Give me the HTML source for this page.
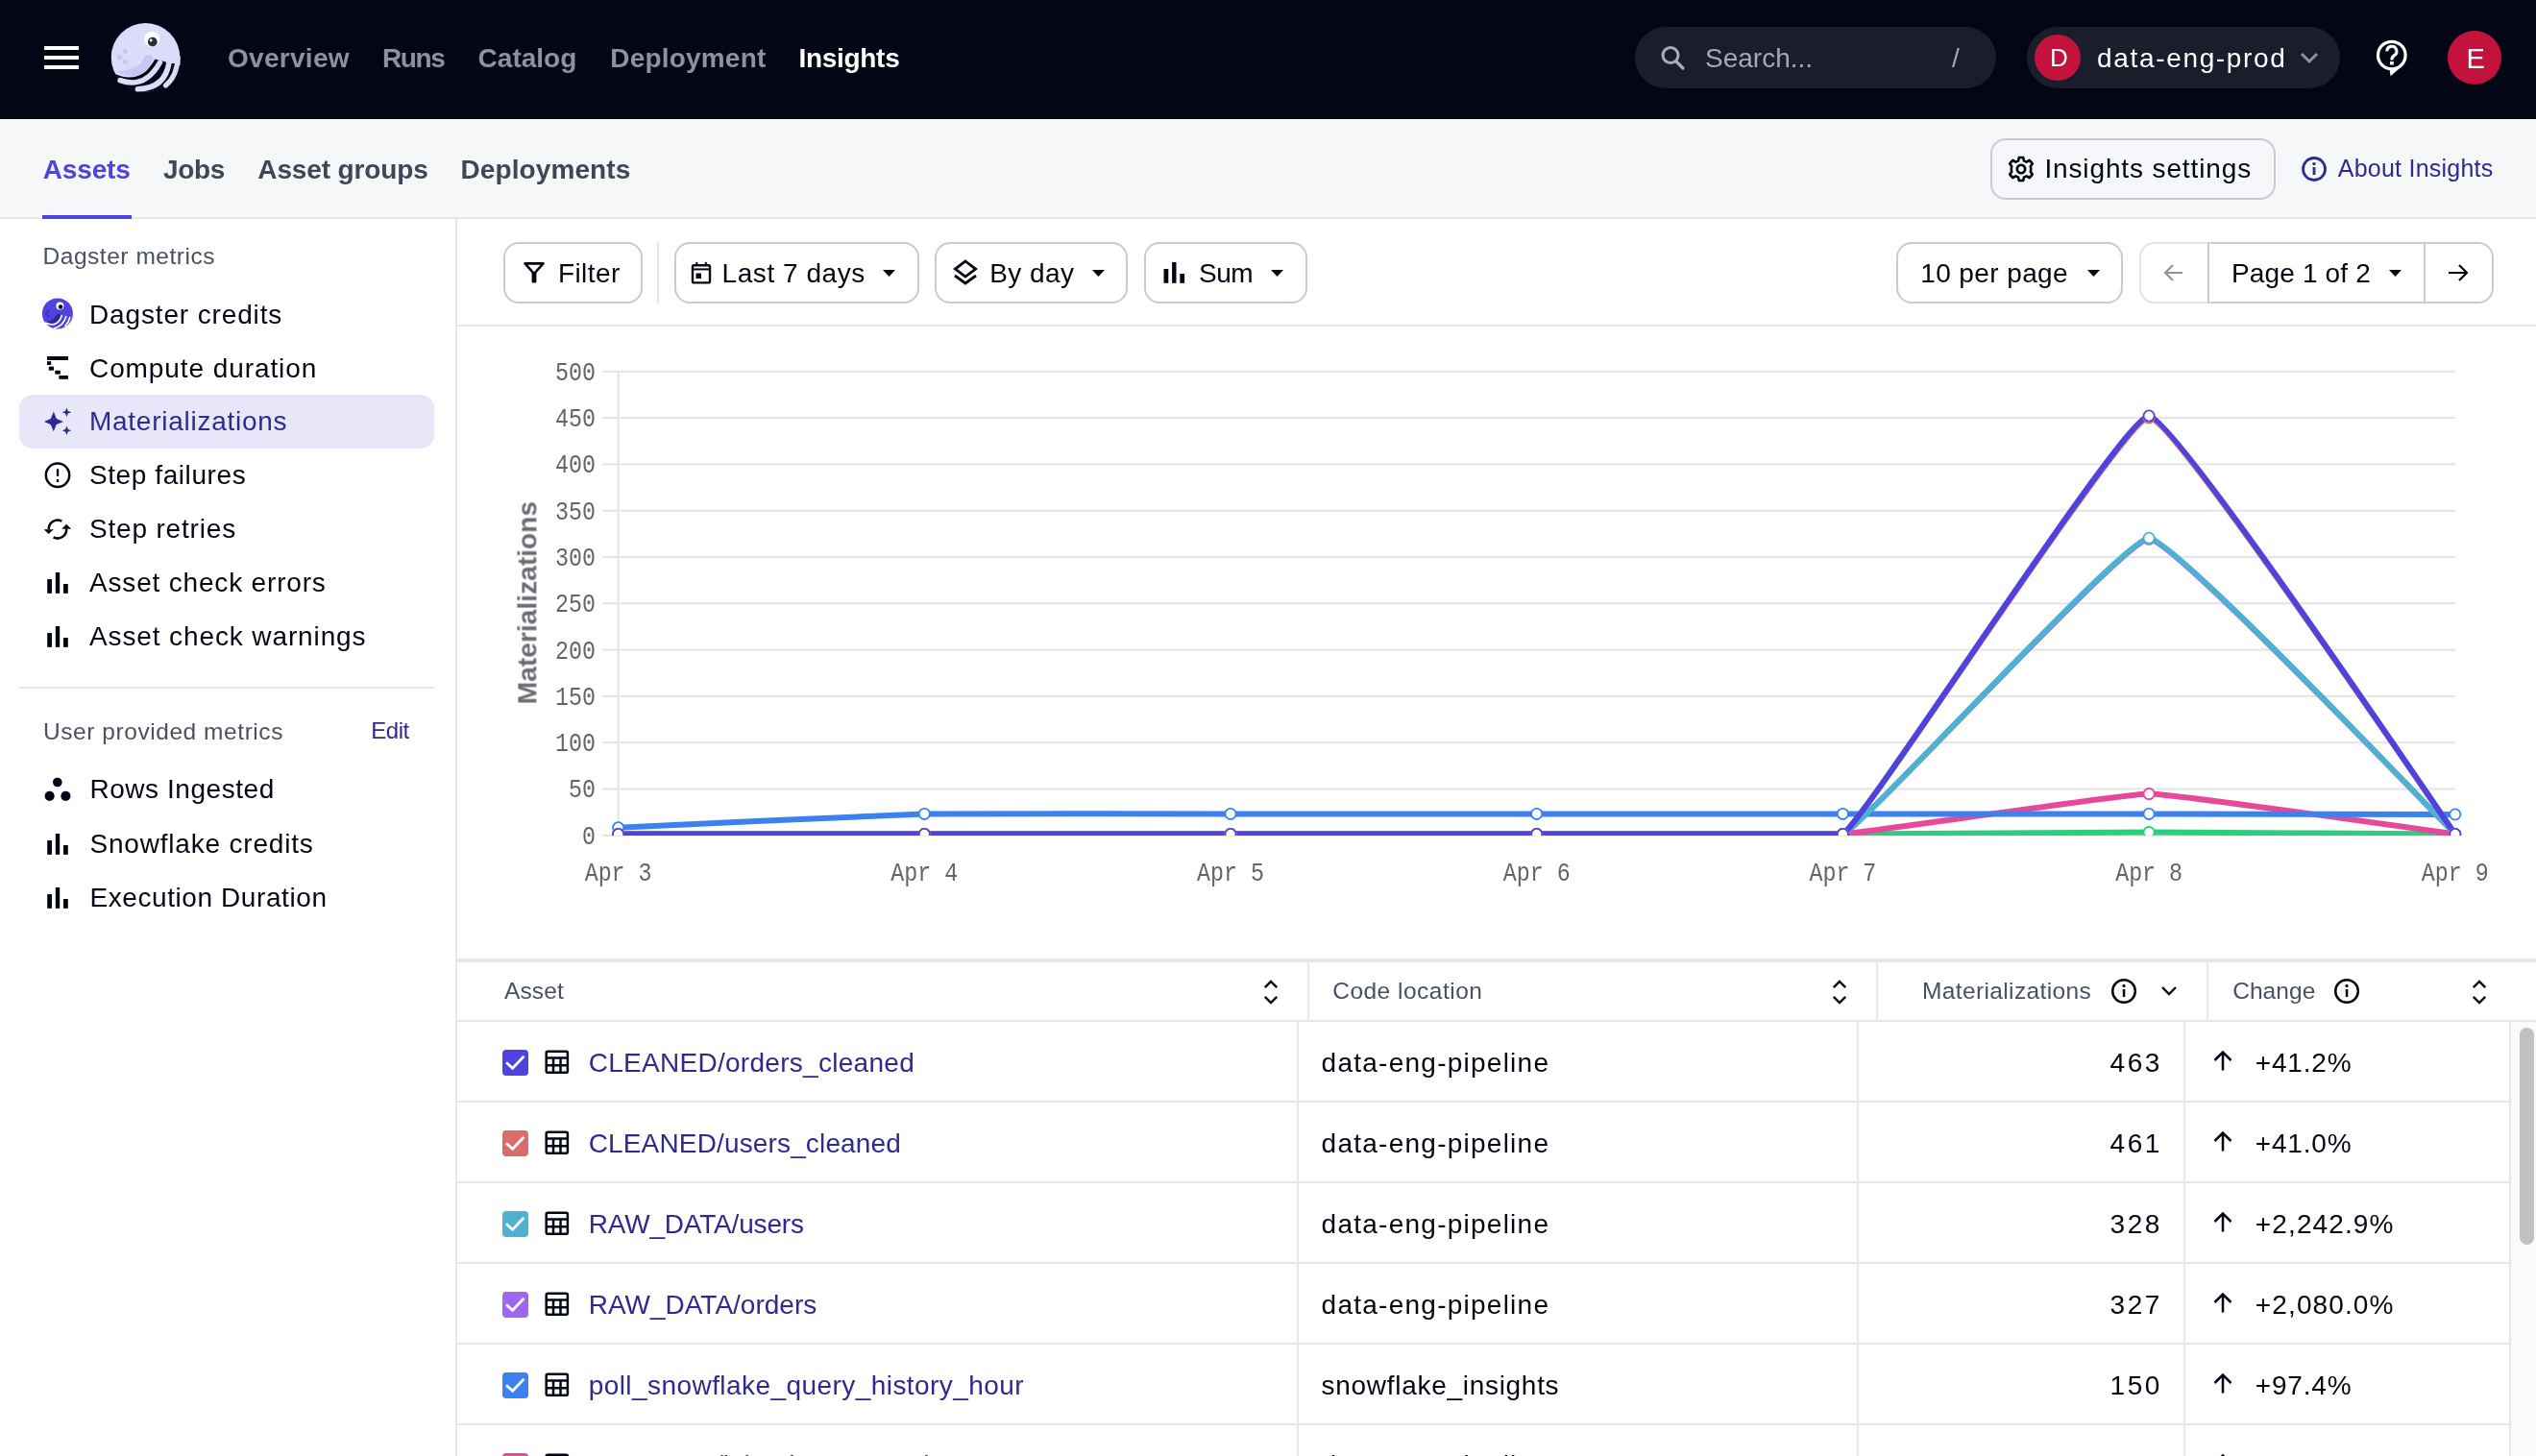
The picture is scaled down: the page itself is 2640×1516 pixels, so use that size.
<!DOCTYPE html>
<html><head><meta charset="utf-8"><style>
html,body{margin:0;padding:0;width:2640px;height:1516px;overflow:hidden;background:#fff;}
body{position:relative;font-family:"Liberation Sans",sans-serif;}
.t{position:absolute;white-space:nowrap;}
.b{position:absolute;display:block;}
</style></head><body><div id="root" style="position:absolute;left:0;top:0;width:2640px;height:1516px;will-change:transform">
<div class="b" style="left:0px;top:0px;width:2640px;height:124px;background:#030615"></div>
<div class="b" style="left:46px;top:48px;width:36px;height:4px;background:#fff"></div>
<div class="b" style="left:46px;top:58px;width:36px;height:4px;background:#fff"></div>
<div class="b" style="left:46px;top:68px;width:36px;height:4px;background:#fff"></div>
<svg class="b" style="left:110px;top:18px;" width="84" height="84" viewBox="0 0 84 84">
<g transform="translate(-110,-18)">
<defs><clipPath id="lc"><circle cx="151.5" cy="59.8" r="35.9"/></clipPath></defs>
<circle cx="151.5" cy="59.8" r="35.8" fill="#dcdcfa"/>
<g clip-path="url(#lc)">
<path d="M118 76 Q145 90 161.5 61.5 Q165 63 169.5 63.5 L172 64.5 Q176 66 179 66 L188 66 L200 110 L110 110 Z" fill="#030615"/>
</g>
<path d="M121 74 Q134 82 146 78 Q156 74 159.5 60 Q156 55 151 58 Q146 74 121 74Z" fill="#c7c7f1"/>
<path d="M125 83.6 Q151 93 166.5 65" stroke="#dcdcfa" stroke-width="5.4" fill="none" stroke-linecap="round"/>
<path d="M143.5 92.8 Q172 92 176 65" stroke="#dcdcfa" stroke-width="5.6" fill="none" stroke-linecap="round"/>
<path d="M172.5 89 Q184.5 79 185 60" stroke="#dcdcfa" stroke-width="5.2" fill="none" stroke-linecap="round"/>
<path d="M181 64 Q183 60 187.5 58 L187.5 68 L183 68 Z" fill="#dcdcfa"/>
<circle cx="158.2" cy="41" r="8" fill="#fff"/>
<circle cx="158.8" cy="43.6" r="4.9" fill="#2b2e40"/>
<circle cx="157.2" cy="42" r="1.4" fill="#fff"/>
<circle cx="130.5" cy="53.5" r="2.5" fill="#c7c7f1"/>
<circle cx="124.6" cy="59.5" r="2.6" fill="#c7c7f1"/>
<circle cx="130.3" cy="64.6" r="2.5" fill="#c7c7f1"/>
</g></svg>
<div class="t" style="left:237.00px;top:43.00px;font-size:28px;line-height:35px;font-weight:700;color:#8d91a0;letter-spacing:0.286px;font-family:"Liberation Sans",sans-serif;">Overview</div>
<div class="t" style="left:398.00px;top:43.00px;font-size:28px;line-height:35px;font-weight:700;color:#8d91a0;letter-spacing:-1.433px;font-family:"Liberation Sans",sans-serif;">Runs</div>
<div class="t" style="left:497.60px;top:43.00px;font-size:28px;line-height:35px;font-weight:700;color:#8d91a0;letter-spacing:0.000px;font-family:"Liberation Sans",sans-serif;">Catalog</div>
<div class="t" style="left:635.30px;top:43.00px;font-size:28px;line-height:35px;font-weight:700;color:#8d91a0;letter-spacing:0.189px;font-family:"Liberation Sans",sans-serif;">Deployment</div>
<div class="t" style="left:831.40px;top:43.00px;font-size:28px;line-height:35px;font-weight:700;color:#ffffff;letter-spacing:-0.286px;font-family:"Liberation Sans",sans-serif;">Insights</div>
<div class="b" style="left:1702px;top:28px;width:376px;height:64px;background:#191d2c;border-radius:32px"></div>
<svg class="b" style="left:1726px;top:44px;" width="30" height="30" viewBox="0 0 30 30"><g transform="translate(-1726,-44)"><circle cx="1739" cy="57.5" r="8" stroke="#a9abbb" stroke-width="3" fill="none"/><path d="M1745 64 L1752 71" stroke="#a9abbb" stroke-width="3.2" stroke-linecap="round"/></g></svg>
<div class="t" style="left:1775.00px;top:43.00px;font-size:28px;line-height:35px;font-weight:400;color:#a6a8b8;letter-spacing:0.000px;font-family:"Liberation Sans",sans-serif;">Search...</div>
<div class="t" style="left:2032.00px;top:43.00px;font-size:28px;line-height:35px;font-weight:400;color:#a6a8b8;letter-spacing:0.000px;font-family:"Liberation Sans",sans-serif;">/</div>
<div class="b" style="left:2110px;top:28px;width:326px;height:64px;background:#191d2c;border-radius:32px"></div>
<div class="b" style="left:2118px;top:36px;width:48px;height:48px;background:#c3123b;border-radius:50%"></div>
<div class="t" style="left:2134.00px;top:44.19px;font-size:26px;line-height:32px;font-weight:400;color:#fff;letter-spacing:0.000px;font-family:"Liberation Sans",sans-serif;">D</div>
<div class="t" style="left:2183.00px;top:43.00px;font-size:28px;line-height:35px;font-weight:400;color:#ffffff;letter-spacing:1.667px;font-family:"Liberation Sans",sans-serif;">data-eng-prod</div>
<svg class="b" style="left:2392px;top:50px;" width="24" height="20" viewBox="0 0 24 20"><path d="M4 6 L12 14 L20 6" stroke="#8d91a0" stroke-width="3" fill="none"/></svg>
<svg class="b" style="left:2466px;top:36px;" width="48" height="48" viewBox="0 0 48 48"><g transform="translate(-2466,-36)"><circle cx="2489.8" cy="57.6" r="14.3" fill="none" stroke="#fff" stroke-width="3.2"/><path d="M2487.4 71.4 L2488.6 79.2 L2504.4 65.6 L2501.2 67.2 Q2496 71.6 2489.8 71.9 Z" fill="#fff"/><path d="M2484.9 53.4 A5 5 0 1 1 2492.4 57.6 Q2489.9 59.2 2489.9 62.4" fill="none" stroke="#fff" stroke-width="3.1"/><rect x="2488" y="64.1" width="3.8" height="3.4" fill="#fff"/></g></svg>
<div class="b" style="left:2548px;top:32px;width:56px;height:56px;background:#c3123b;border-radius:50%"></div>
<div class="t" style="left:2567.50px;top:42.95px;font-size:29px;line-height:36px;font-weight:400;color:#fff;letter-spacing:0.000px;font-family:"Liberation Sans",sans-serif;transform:scaleX(0.82);transform-origin:left">E</div>
<div class="b" style="left:0px;top:124px;width:2640px;height:104px;background:#f6f7f9"></div>
<div class="b" style="left:0px;top:226px;width:2640px;height:2px;background:#e6e7eb"></div>
<div class="t" style="left:44.80px;top:158.80px;font-size:28px;line-height:35px;font-weight:700;color:#4f43dd;letter-spacing:-0.160px;font-family:"Liberation Sans",sans-serif;">Assets</div>
<div class="b" style="left:44px;top:224px;width:93px;height:4px;background:#4f43dd"></div>
<div class="t" style="left:169.90px;top:158.80px;font-size:28px;line-height:35px;font-weight:700;color:#3f4657;letter-spacing:-0.333px;font-family:"Liberation Sans",sans-serif;">Jobs</div>
<div class="t" style="left:268.30px;top:158.80px;font-size:28px;line-height:35px;font-weight:700;color:#3f4657;letter-spacing:-0.127px;font-family:"Liberation Sans",sans-serif;">Asset groups</div>
<div class="t" style="left:479.50px;top:158.80px;font-size:28px;line-height:35px;font-weight:700;color:#3f4657;letter-spacing:0.100px;font-family:"Liberation Sans",sans-serif;">Deployments</div>
<div class="b" style="left:2072px;top:144px;width:297px;height:64px;border:2px solid #c9cad4;border-radius:16px;box-sizing:border-box"></div>
<svg class="b" style="left:2090px;top:162px;" width="28" height="28" viewBox="0 0 28 28"><g transform="translate(14,14)" fill="none" stroke="#030615" stroke-width="2.6"><path d="M-2.2,-12 L2.2,-12 L3,-8.6 L5.6,-7.3 L8.7,-9 L11.8,-5.6 L9.8,-2.8 L10.3,0 L9.8,2.8 L11.8,5.6 L8.7,9 L5.6,7.3 L3,8.6 L2.2,12 L-2.2,12 L-3,8.6 L-5.6,7.3 L-8.7,9 L-11.8,5.6 L-9.8,2.8 L-10.3,0 L-9.8,-2.8 L-11.8,-5.6 L-8.7,-9 L-5.6,-7.3 L-3,-8.6 Z" stroke-linejoin="round"/><circle r="4.2"/></g></svg>
<div class="t" style="left:2128.40px;top:158.40px;font-size:28px;line-height:35px;font-weight:400;color:#030615;letter-spacing:0.875px;font-family:"Liberation Sans",sans-serif;">Insights settings</div>
<svg class="b" style="left:2394px;top:161px;" width="30" height="30" viewBox="0 0 30 30"><circle cx="15" cy="15" r="11.5" fill="none" stroke="#2e2a91" stroke-width="2.8"/><rect x="13.6" y="13" width="2.8" height="8" fill="#2e2a91"/><circle cx="15" cy="9.6" r="1.7" fill="#2e2a91"/></svg>
<div class="t" style="left:2433.80px;top:159.84px;font-size:25px;line-height:31px;font-weight:400;color:#2e2a91;letter-spacing:0.231px;font-family:"Liberation Sans",sans-serif;">About Insights</div>
<div class="b" style="left:474px;top:228px;width:2px;height:1288px;background:#e6e7eb"></div>
<div class="t" style="left:44.50px;top:251.41px;font-size:24.5px;line-height:31px;font-weight:400;color:#4a5063;letter-spacing:0.536px;font-family:"Liberation Sans",sans-serif;">Dagster metrics</div>
<div class="b" style="left:20px;top:411px;width:432px;height:56px;background:#e8e7f9;border-radius:14px"></div>
<div class="t" style="left:93.00px;top:309.80px;font-size:28px;line-height:35px;font-weight:400;color:#030615;letter-spacing:0.857px;font-family:"Liberation Sans",sans-serif;">Dagster credits</div>
<div class="t" style="left:93.00px;top:365.80px;font-size:28px;line-height:35px;font-weight:400;color:#030615;letter-spacing:0.913px;font-family:"Liberation Sans",sans-serif;">Compute duration</div>
<div class="t" style="left:93.00px;top:421.30px;font-size:28px;line-height:35px;font-weight:400;color:#2e2a91;letter-spacing:0.733px;font-family:"Liberation Sans",sans-serif;">Materializations</div>
<div class="t" style="left:93.00px;top:476.80px;font-size:28px;line-height:35px;font-weight:400;color:#030615;letter-spacing:0.583px;font-family:"Liberation Sans",sans-serif;">Step failures</div>
<div class="t" style="left:93.00px;top:532.80px;font-size:28px;line-height:35px;font-weight:400;color:#030615;letter-spacing:0.818px;font-family:"Liberation Sans",sans-serif;">Step retries</div>
<div class="t" style="left:93.00px;top:588.80px;font-size:28px;line-height:35px;font-weight:400;color:#030615;letter-spacing:0.824px;font-family:"Liberation Sans",sans-serif;">Asset check errors</div>
<div class="t" style="left:93.00px;top:644.80px;font-size:28px;line-height:35px;font-weight:400;color:#030615;letter-spacing:0.884px;font-family:"Liberation Sans",sans-serif;">Asset check warnings</div>
<div class="b" style="left:20px;top:715px;width:432px;height:2px;background:#e6e7eb"></div>
<div class="t" style="left:45.00px;top:746.01px;font-size:24.5px;line-height:31px;font-weight:400;color:#4a5063;letter-spacing:0.557px;font-family:"Liberation Sans",sans-serif;">User provided metrics</div>
<div class="t" style="left:386.20px;top:746.38px;font-size:24px;line-height:30px;font-weight:400;color:#2e2a91;letter-spacing:-0.433px;font-family:"Liberation Sans",sans-serif;">Edit</div>
<div class="t" style="left:93.40px;top:804.40px;font-size:28px;line-height:35px;font-weight:400;color:#030615;letter-spacing:0.550px;font-family:"Liberation Sans",sans-serif;">Rows Ingested</div>
<div class="t" style="left:93.40px;top:860.50px;font-size:28px;line-height:35px;font-weight:400;color:#030615;letter-spacing:0.812px;font-family:"Liberation Sans",sans-serif;">Snowflake credits</div>
<div class="t" style="left:93.40px;top:916.50px;font-size:28px;line-height:35px;font-weight:400;color:#030615;letter-spacing:0.588px;font-family:"Liberation Sans",sans-serif;">Execution Duration</div>
<svg class="b" style="left:42px;top:308px;" width="36" height="36" viewBox="0 0 36 36"><g transform="translate(-42,-308)">
<circle cx="59.9" cy="326.4" r="16" fill="#4f43dd"/>
<circle cx="62.4" cy="318.5" r="4" fill="#fff"/><circle cx="63" cy="319.5" r="2.2" fill="#030615"/>
<circle cx="50.2" cy="324" r="1.1" fill="#2e2890"/><circle cx="48.1" cy="326.5" r="1.1" fill="#2e2890"/><circle cx="50.3" cy="329" r="1.1" fill="#2e2890"/>
<path d="M46.6 335.6 Q56.6 341 63.5 332.5 L63 327 Q59 326 56.5 331 Q53 335 46.6 335.6Z" fill="#2e2890"/>
<path d="M47 336 Q60 342 64.5 328" stroke="#fff" stroke-width="1.6" fill="none"/>
<path d="M55.8 342 Q66 340 69 329" stroke="#fff" stroke-width="1.6" fill="none"/>
<path d="M67.5 340 Q71.5 336 73 330" stroke="#fff" stroke-width="1.6" fill="none"/>
</g></svg>
<svg class="b" style="left:46px;top:368px;" width="28" height="30" viewBox="0 0 28 30"><g transform="translate(-46,-368)" fill="#030615">
<rect x="49" y="371" width="22" height="4"/><rect x="49" y="376.2" width="4.2" height="3.8"/><rect x="50.8" y="381.7" width="5.2" height="4"/><rect x="57.3" y="385.8" width="5.5" height="3.8"/><rect x="61.3" y="391" width="9.6" height="3.8"/></g></svg>
<svg class="b" style="left:44px;top:426px;overflow:visible" width="32" height="26" viewBox="0 0 32 26"><g transform="translate(-44,-426)" fill="#2e2a91">
<path d="M55.8 428.6 L58.8 436 L66 439 L58.8 442 L55.8 449.2 L52.8 442 L45.8 439 L52.8 436Z"/>
<path d="M69.4 424.6 L70.8 428 L74.3 429.3 L70.8 430.6 L69.4 434 L68 430.6 L64.5 429.3 L68 428Z"/>
<path d="M69.4 443.6 L70.8 447 L74.3 448.3 L70.8 449.6 L69.4 453 L68 449.6 L64.5 448.3 L68 447Z"/>
</g></svg>
<svg class="b" style="left:44px;top:478px;" width="32" height="34" viewBox="0 0 32 34"><g transform="translate(-44,-478)">
<circle cx="60" cy="494.8" r="12.2" fill="none" stroke="#030615" stroke-width="2.5"/>
<rect x="58.9" y="488.3" width="2.3" height="7.6" fill="#030615"/><rect x="58.9" y="499" width="2.3" height="3" fill="#030615"/></g></svg>
<svg class="b" style="left:42px;top:538px;overflow:visible" width="36" height="24" viewBox="0 0 36 24"><g transform="translate(-42,-538)">
<path d="M64.3 542.6 A9.3 9.3 0 0 0 50.7 551.2" fill="none" stroke="#030615" stroke-width="2.6"/>
<path d="M45.6 551.2 L55.8 551.2 L50.7 556 Z" fill="#030615"/>
<path d="M55.6 559.4 A9.3 9.3 0 0 0 69.2 550.6" fill="none" stroke="#030615" stroke-width="2.6"/>
<path d="M64.2 550.8 L74.2 550.8 L69.2 545.8 Z" fill="#030615"/></g></svg>
<svg class="b" style="left:46px;top:594px;" width="28" height="26" viewBox="0 0 28 26"><g fill="#030615" transform="translate(3.2,2) scale(1.0)"><rect x="0" y="7" width="4.8" height="14.8"/><rect x="8.6" y="0" width="4.4" height="21.8"/><rect x="16.8" y="12" width="4.8" height="9.8"/></g></svg>
<svg class="b" style="left:46px;top:650px;" width="28" height="26" viewBox="0 0 28 26"><g fill="#030615" transform="translate(3.2,2) scale(1.0)"><rect x="0" y="7" width="4.8" height="14.8"/><rect x="8.6" y="0" width="4.4" height="21.8"/><rect x="16.8" y="12" width="4.8" height="9.8"/></g></svg>
<svg class="b" style="left:46px;top:866px;" width="28" height="26" viewBox="0 0 28 26"><g fill="#030615" transform="translate(3.2,2) scale(1.0)"><rect x="0" y="7" width="4.8" height="14.8"/><rect x="8.6" y="0" width="4.4" height="21.8"/><rect x="16.8" y="12" width="4.8" height="9.8"/></g></svg>
<svg class="b" style="left:46px;top:922px;" width="28" height="26" viewBox="0 0 28 26"><g fill="#030615" transform="translate(3.2,2) scale(1.0)"><rect x="0" y="7" width="4.8" height="14.8"/><rect x="8.6" y="0" width="4.4" height="21.8"/><rect x="16.8" y="12" width="4.8" height="9.8"/></g></svg>
<svg class="b" style="left:44px;top:806px;" width="32" height="30" viewBox="0 0 32 30"><g transform="translate(-44,-806)" fill="#030615"><circle cx="59.8" cy="814.5" r="4.8"/><circle cx="51.6" cy="828.8" r="5.1"/><circle cx="68.4" cy="828.8" r="5.1"/></g></svg>
<div class="b" style="left:476px;top:338px;width:2164px;height:2px;background:#e6e7eb"></div>
<div class="b" style="left:524px;top:252px;width:145px;height:64px;border:2px solid #c9cad4;border-radius:16px;box-sizing:border-box;background:#fff"></div>
<div class="b" style="left:702px;top:252px;width:254.6px;height:64px;border:2px solid #c9cad4;border-radius:16px;box-sizing:border-box;background:#fff"></div>
<div class="b" style="left:973px;top:252px;width:201px;height:64px;border:2px solid #c9cad4;border-radius:16px;box-sizing:border-box;background:#fff"></div>
<div class="b" style="left:1191px;top:252px;width:170px;height:64px;border:2px solid #c9cad4;border-radius:16px;box-sizing:border-box;background:#fff"></div>
<div class="b" style="left:684px;top:252px;width:2px;height:64px;background:#e6e7eb"></div>
<svg class="b" style="left:540px;top:268px;" width="32" height="32" viewBox="0 0 32 32"><g transform="translate(-540,-268)"><path d="M546.5 274.4 L565.5 274.4 L556 285 Z" fill="none" stroke="#030615" stroke-width="2.6" stroke-linejoin="round"/><rect x="553.6" y="283" width="4.8" height="11.5" rx="1.2" fill="#030615"/></g></svg>
<div class="t" style="left:581.00px;top:267.20px;font-size:28px;line-height:35px;font-weight:400;color:#030615;letter-spacing:0.400px;font-family:"Liberation Sans",sans-serif;">Filter</div>
<svg class="b" style="left:716px;top:270px;" width="28" height="30" viewBox="0 0 28 30"><g transform="translate(-716,-270)"><rect x="721" y="276.2" width="18" height="18.2" rx="1.5" fill="none" stroke="#030615" stroke-width="2.4"/><rect x="721" y="279.4" width="18" height="2" fill="#030615"/><rect x="724.5" y="284.5" width="5.5" height="5.5" fill="#030615"/><rect x="724.3" y="273" width="2" height="4" fill="#030615"/><rect x="733.8" y="273" width="2" height="4" fill="#030615"/></g></svg>
<div class="t" style="left:751.60px;top:267.20px;font-size:28px;line-height:35px;font-weight:400;color:#030615;letter-spacing:0.550px;font-family:"Liberation Sans",sans-serif;">Last 7 days</div>
<svg class="b" style="left:918.5px;top:281px;" width="14" height="8" viewBox="0 0 14 8"><path d="M0 0 L13 0 L6.5 7 Z" fill="#030615"/></svg>
<svg class="b" style="left:988px;top:266px;" width="34" height="34" viewBox="0 0 34 34"><g transform="translate(-988,-266)" fill="none" stroke="#030615" stroke-width="2.8"><path d="M1005 272 L1015.6 280.1 L1005 288 L994.4 280.1 Z" stroke-linejoin="miter"/><path d="M994 287 L1005 295 L1016 287"/></g></svg>
<div class="t" style="left:1030.30px;top:267.20px;font-size:28px;line-height:35px;font-weight:400;color:#030615;letter-spacing:0.400px;font-family:"Liberation Sans",sans-serif;">By day</div>
<svg class="b" style="left:1136.7px;top:281px;" width="14" height="8" viewBox="0 0 14 8"><path d="M0 0 L13 0 L6.5 7 Z" fill="#030615"/></svg>
<svg class="b" style="left:1208px;top:270px;" width="30" height="28" viewBox="0 0 30 28"><g fill="#030615" transform="translate(3.5,3) scale(1.0)"><rect x="0" y="7" width="4.8" height="14.8"/><rect x="8.6" y="0" width="4.4" height="21.8"/><rect x="16.8" y="12" width="4.8" height="9.8"/></g></svg>
<div class="t" style="left:1248.00px;top:267.20px;font-size:28px;line-height:35px;font-weight:400;color:#030615;letter-spacing:-0.500px;font-family:"Liberation Sans",sans-serif;">Sum</div>
<svg class="b" style="left:1322.6px;top:281px;" width="14" height="8" viewBox="0 0 14 8"><path d="M0 0 L13 0 L6.5 7 Z" fill="#030615"/></svg>
<div class="b" style="left:1974px;top:252px;width:236px;height:64px;border:2px solid #c9cad4;border-radius:16px;box-sizing:border-box;background:#fff"></div>
<div class="t" style="left:1999.20px;top:267.20px;font-size:28px;line-height:35px;font-weight:400;color:#030615;letter-spacing:0.400px;font-family:"Liberation Sans",sans-serif;">10 per page</div>
<svg class="b" style="left:2172.8px;top:281px;" width="14" height="8" viewBox="0 0 14 8"><path d="M0 0 L13 0 L6.5 7 Z" fill="#030615"/></svg>
<div class="b" style="left:2227px;top:252px;width:369px;height:64px;border:2px solid #c9cad4;border-radius:16px;box-sizing:border-box;background:#fff"></div>
<div class="b" style="left:2227px;top:252px;width:74px;height:64px;border:2px solid #e3e4ea;border-right:none;border-radius:16px 0 0 16px;box-sizing:border-box;background:#fff"></div>
<div class="b" style="left:2298px;top:252px;width:2px;height:64px;background:#c9cad4"></div>
<div class="b" style="left:2523px;top:252px;width:2px;height:64px;background:#c9cad4"></div>
<svg class="b" style="left:2250px;top:272px;" width="28" height="24" viewBox="0 0 28 24"><path d="M22 12 L4 12 M12 4 L4 12 L12 20" fill="none" stroke="#8d91a0" stroke-width="2.1"/></svg>
<div class="t" style="left:2323.00px;top:267.20px;font-size:28px;line-height:35px;font-weight:400;color:#030615;letter-spacing:0.150px;font-family:"Liberation Sans",sans-serif;">Page 1 of 2</div>
<svg class="b" style="left:2487px;top:281px;" width="14" height="8" viewBox="0 0 14 8"><path d="M0 0 L13 0 L6.5 7 Z" fill="#030615"/></svg>
<svg class="b" style="left:2546px;top:272px;" width="28" height="24" viewBox="0 0 28 24"><path d="M3 12 L22 12 M14 4 L22 12 L14 20" fill="none" stroke="#030615" stroke-width="2.2"/></svg>
<svg class="b" style="left:476px;top:340px;" width="2164" height="658" viewBox="0 0 2164 658"><g transform="translate(-476,-340)"><rect x="627" y="868.8" width="1929" height="2" fill="#e4e4e4"/><rect x="627" y="820.5" width="1929" height="2" fill="#e4e4e4"/><rect x="627" y="772.2" width="1929" height="2" fill="#e4e4e4"/><rect x="627" y="723.9" width="1929" height="2" fill="#e4e4e4"/><rect x="627" y="675.6" width="1929" height="2" fill="#e4e4e4"/><rect x="627" y="627.3" width="1929" height="2" fill="#e4e4e4"/><rect x="627" y="579.0" width="1929" height="2" fill="#e4e4e4"/><rect x="627" y="530.7" width="1929" height="2" fill="#e4e4e4"/><rect x="627" y="482.4" width="1929" height="2" fill="#e4e4e4"/><rect x="627" y="434.1" width="1929" height="2" fill="#e4e4e4"/><rect x="627" y="385.8" width="1929" height="2" fill="#e4e4e4"/><rect x="642.6" y="386" width="2" height="484.79999999999995" fill="#e4e4e4"/><text x="620" y="878.8" text-anchor="end" font-family="Liberation Mono" font-size="23.3" fill="#64656c" transform="translate(0,-175.76) scale(1,1.2)">0</text><text x="620" y="830.5" text-anchor="end" font-family="Liberation Mono" font-size="23.3" fill="#64656c" transform="translate(0,-166.10) scale(1,1.2)">50</text><text x="620" y="782.2" text-anchor="end" font-family="Liberation Mono" font-size="23.3" fill="#64656c" transform="translate(0,-156.44) scale(1,1.2)">100</text><text x="620" y="733.9" text-anchor="end" font-family="Liberation Mono" font-size="23.3" fill="#64656c" transform="translate(0,-146.78) scale(1,1.2)">150</text><text x="620" y="685.6" text-anchor="end" font-family="Liberation Mono" font-size="23.3" fill="#64656c" transform="translate(0,-137.12) scale(1,1.2)">200</text><text x="620" y="637.3" text-anchor="end" font-family="Liberation Mono" font-size="23.3" fill="#64656c" transform="translate(0,-127.46) scale(1,1.2)">250</text><text x="620" y="589.0" text-anchor="end" font-family="Liberation Mono" font-size="23.3" fill="#64656c" transform="translate(0,-117.80) scale(1,1.2)">300</text><text x="620" y="540.7" text-anchor="end" font-family="Liberation Mono" font-size="23.3" fill="#64656c" transform="translate(0,-108.14) scale(1,1.2)">350</text><text x="620" y="492.4" text-anchor="end" font-family="Liberation Mono" font-size="23.3" fill="#64656c" transform="translate(0,-98.48) scale(1,1.2)">400</text><text x="620" y="444.1" text-anchor="end" font-family="Liberation Mono" font-size="23.3" fill="#64656c" transform="translate(0,-88.82) scale(1,1.2)">450</text><text x="620" y="395.8" text-anchor="end" font-family="Liberation Mono" font-size="23.3" fill="#64656c" transform="translate(0,-79.16) scale(1,1.2)">500</text><text x="643.6" y="917" text-anchor="middle" font-family="Liberation Mono" font-size="23.3" fill="#64656c" transform="translate(0,-183.40) scale(1,1.2)">Apr 3</text><text x="962.3" y="917" text-anchor="middle" font-family="Liberation Mono" font-size="23.3" fill="#64656c" transform="translate(0,-183.40) scale(1,1.2)">Apr 4</text><text x="1281.0" y="917" text-anchor="middle" font-family="Liberation Mono" font-size="23.3" fill="#64656c" transform="translate(0,-183.40) scale(1,1.2)">Apr 5</text><text x="1599.7" y="917" text-anchor="middle" font-family="Liberation Mono" font-size="23.3" fill="#64656c" transform="translate(0,-183.40) scale(1,1.2)">Apr 6</text><text x="1918.4" y="917" text-anchor="middle" font-family="Liberation Mono" font-size="23.3" fill="#64656c" transform="translate(0,-183.40) scale(1,1.2)">Apr 7</text><text x="2237.1" y="917" text-anchor="middle" font-family="Liberation Mono" font-size="23.3" fill="#64656c" transform="translate(0,-183.40) scale(1,1.2)">Apr 8</text><text x="2555.8" y="917" text-anchor="middle" font-family="Liberation Mono" font-size="23.3" fill="#64656c" transform="translate(0,-183.40) scale(1,1.2)">Apr 9</text><text x="0" y="0" text-anchor="middle" font-family="Liberation Sans" font-weight="700" font-size="28.2" fill="#6c6d73" transform="translate(558.4,627.6) rotate(-90)">Materializations</text>
<defs><clipPath id="ca"><rect x="600" y="360" width="2040" height="510"/></clipPath></defs>
<g clip-path="url(#ca)"><path d="M643.6 868.5 C656.3 868.5 936.8 868.5 962.3 868.5 C987.8 868.5 1255.5 868.5 1281.0 868.5 C1306.5 868.5 1574.2 868.5 1599.7 868.5 C1625.2 868.5 1892.9 868.5 1918.4 868.5 C1943.9 868.4 2211.6 866.6 2237.1 866.6 C2262.6 866.6 2543.1 868.4 2555.8 868.5" fill="none" stroke="#2ecc80" stroke-width="6" stroke-linejoin="round"/><path d="M643.6 868.5 C656.3 868.5 936.8 868.5 962.3 868.5 C987.8 868.5 1255.5 868.5 1281.0 868.5 C1306.5 868.5 1574.2 868.5 1599.7 868.5 C1625.2 868.5 1892.9 868.5 1918.4 868.5 C1943.9 866.8 2211.6 826.6 2237.1 826.6 C2262.6 826.6 2543.1 866.8 2555.8 868.5" fill="none" stroke="#e6489a" stroke-width="6" stroke-linejoin="round"/><path d="M643.6 861.7 C656.3 861.2 936.8 848.0 962.3 847.4 C987.8 846.9 1255.5 847.4 1281.0 847.4 C1306.5 847.4 1574.2 847.4 1599.7 847.4 C1625.2 847.4 1892.9 847.4 1918.4 847.4 C1943.9 847.4 2211.6 847.4 2237.1 847.4 C2262.6 847.5 2543.1 848.0 2555.8 848.0" fill="none" stroke="#3b82f0" stroke-width="6" stroke-linejoin="round"/><path d="M643.6 868.5 C656.3 868.5 936.8 868.5 962.3 868.5 C987.8 868.5 1255.5 868.5 1281.0 868.5 C1306.5 868.5 1574.2 868.5 1599.7 868.5 C1625.2 868.5 1892.9 868.5 1918.4 868.5 C1943.9 856.2 2211.6 561.3 2237.1 561.3 C2262.6 561.3 2543.1 856.2 2555.8 868.5" fill="none" stroke="#a066f0" stroke-width="6" stroke-linejoin="round"/><path d="M643.6 868.5 C656.3 868.5 936.8 868.5 962.3 868.5 C987.8 868.5 1255.5 868.5 1281.0 868.5 C1306.5 868.5 1574.2 868.5 1599.7 868.5 C1625.2 868.5 1892.9 868.5 1918.4 868.5 C1943.9 856.2 2211.6 560.3 2237.1 560.3 C2262.6 560.3 2543.1 856.2 2555.8 868.5" fill="none" stroke="#4fb1d1" stroke-width="6" stroke-linejoin="round"/><path d="M643.6 868.5 C656.3 868.5 936.8 868.5 962.3 868.5 C987.8 868.5 1255.5 868.5 1281.0 868.5 C1306.5 868.5 1574.2 868.5 1599.7 868.5 C1625.2 868.5 1892.9 868.5 1918.4 868.5 C1943.9 851.2 2211.6 434.8 2237.1 434.8 C2262.6 434.8 2543.1 851.2 2555.8 868.5" fill="none" stroke="#d96c6c" stroke-width="6" stroke-linejoin="round"/><path d="M643.6 868.5 C656.3 868.5 936.8 868.5 962.3 868.5 C987.8 868.5 1255.5 868.5 1281.0 868.5 C1306.5 868.5 1574.2 868.5 1599.7 868.5 C1625.2 868.5 1892.9 868.5 1918.4 868.5 C1943.9 851.1 2211.6 433.0 2237.1 433.0 C2262.6 433.0 2543.1 851.1 2555.8 868.5" fill="none" stroke="#4f43dd" stroke-width="6" stroke-linejoin="round"/><circle cx="643.6" cy="868.5" r="5.6" fill="#fff" stroke="#2ecc80" stroke-width="1.8"/><circle cx="962.3" cy="868.5" r="5.6" fill="#fff" stroke="#2ecc80" stroke-width="1.8"/><circle cx="1281.0" cy="868.5" r="5.6" fill="#fff" stroke="#2ecc80" stroke-width="1.8"/><circle cx="1599.7" cy="868.5" r="5.6" fill="#fff" stroke="#2ecc80" stroke-width="1.8"/><circle cx="1918.4" cy="868.5" r="5.6" fill="#fff" stroke="#2ecc80" stroke-width="1.8"/><circle cx="2237.1" cy="866.6" r="5.6" fill="#fff" stroke="#2ecc80" stroke-width="1.8"/><circle cx="2555.8" cy="868.5" r="5.6" fill="#fff" stroke="#2ecc80" stroke-width="1.8"/><circle cx="643.6" cy="868.5" r="5.6" fill="#fff" stroke="#e6489a" stroke-width="1.8"/><circle cx="962.3" cy="868.5" r="5.6" fill="#fff" stroke="#e6489a" stroke-width="1.8"/><circle cx="1281.0" cy="868.5" r="5.6" fill="#fff" stroke="#e6489a" stroke-width="1.8"/><circle cx="1599.7" cy="868.5" r="5.6" fill="#fff" stroke="#e6489a" stroke-width="1.8"/><circle cx="1918.4" cy="868.5" r="5.6" fill="#fff" stroke="#e6489a" stroke-width="1.8"/><circle cx="2237.1" cy="826.6" r="5.6" fill="#fff" stroke="#e6489a" stroke-width="1.8"/><circle cx="2555.8" cy="868.5" r="5.6" fill="#fff" stroke="#e6489a" stroke-width="1.8"/><circle cx="643.6" cy="861.7" r="5.6" fill="#fff" stroke="#3b82f0" stroke-width="1.8"/><circle cx="962.3" cy="847.4" r="5.6" fill="#fff" stroke="#3b82f0" stroke-width="1.8"/><circle cx="1281.0" cy="847.4" r="5.6" fill="#fff" stroke="#3b82f0" stroke-width="1.8"/><circle cx="1599.7" cy="847.4" r="5.6" fill="#fff" stroke="#3b82f0" stroke-width="1.8"/><circle cx="1918.4" cy="847.4" r="5.6" fill="#fff" stroke="#3b82f0" stroke-width="1.8"/><circle cx="2237.1" cy="847.4" r="5.6" fill="#fff" stroke="#3b82f0" stroke-width="1.8"/><circle cx="2555.8" cy="848.0" r="5.6" fill="#fff" stroke="#3b82f0" stroke-width="1.8"/><circle cx="643.6" cy="868.5" r="5.6" fill="#fff" stroke="#a066f0" stroke-width="1.8"/><circle cx="962.3" cy="868.5" r="5.6" fill="#fff" stroke="#a066f0" stroke-width="1.8"/><circle cx="1281.0" cy="868.5" r="5.6" fill="#fff" stroke="#a066f0" stroke-width="1.8"/><circle cx="1599.7" cy="868.5" r="5.6" fill="#fff" stroke="#a066f0" stroke-width="1.8"/><circle cx="1918.4" cy="868.5" r="5.6" fill="#fff" stroke="#a066f0" stroke-width="1.8"/><circle cx="2237.1" cy="561.3" r="5.6" fill="#fff" stroke="#a066f0" stroke-width="1.8"/><circle cx="2555.8" cy="868.5" r="5.6" fill="#fff" stroke="#a066f0" stroke-width="1.8"/><circle cx="643.6" cy="868.5" r="5.6" fill="#fff" stroke="#4fb1d1" stroke-width="1.8"/><circle cx="962.3" cy="868.5" r="5.6" fill="#fff" stroke="#4fb1d1" stroke-width="1.8"/><circle cx="1281.0" cy="868.5" r="5.6" fill="#fff" stroke="#4fb1d1" stroke-width="1.8"/><circle cx="1599.7" cy="868.5" r="5.6" fill="#fff" stroke="#4fb1d1" stroke-width="1.8"/><circle cx="1918.4" cy="868.5" r="5.6" fill="#fff" stroke="#4fb1d1" stroke-width="1.8"/><circle cx="2237.1" cy="560.3" r="5.6" fill="#fff" stroke="#4fb1d1" stroke-width="1.8"/><circle cx="2555.8" cy="868.5" r="5.6" fill="#fff" stroke="#4fb1d1" stroke-width="1.8"/><circle cx="643.6" cy="868.5" r="5.6" fill="#fff" stroke="#d96c6c" stroke-width="1.8"/><circle cx="962.3" cy="868.5" r="5.6" fill="#fff" stroke="#d96c6c" stroke-width="1.8"/><circle cx="1281.0" cy="868.5" r="5.6" fill="#fff" stroke="#d96c6c" stroke-width="1.8"/><circle cx="1599.7" cy="868.5" r="5.6" fill="#fff" stroke="#d96c6c" stroke-width="1.8"/><circle cx="1918.4" cy="868.5" r="5.6" fill="#fff" stroke="#d96c6c" stroke-width="1.8"/><circle cx="2237.1" cy="434.8" r="5.6" fill="#fff" stroke="#d96c6c" stroke-width="1.8"/><circle cx="2555.8" cy="868.5" r="5.6" fill="#fff" stroke="#d96c6c" stroke-width="1.8"/><circle cx="643.6" cy="868.5" r="5.6" fill="#fff" stroke="#4f43dd" stroke-width="1.8"/><circle cx="962.3" cy="868.5" r="5.6" fill="#fff" stroke="#4f43dd" stroke-width="1.8"/><circle cx="1281.0" cy="868.5" r="5.6" fill="#fff" stroke="#4f43dd" stroke-width="1.8"/><circle cx="1599.7" cy="868.5" r="5.6" fill="#fff" stroke="#4f43dd" stroke-width="1.8"/><circle cx="1918.4" cy="868.5" r="5.6" fill="#fff" stroke="#4f43dd" stroke-width="1.8"/><circle cx="2237.1" cy="433.0" r="5.6" fill="#fff" stroke="#4f43dd" stroke-width="1.8"/><circle cx="2555.8" cy="868.5" r="5.6" fill="#fff" stroke="#4f43dd" stroke-width="1.8"/></g></g></svg>
<div class="b" style="left:476px;top:998px;width:2164px;height:4px;background:#e6e7eb"></div>
<div class="b" style="left:476px;top:1062px;width:2164px;height:2px;background:#e6e7eb"></div>
<div class="t" style="left:524.90px;top:1016.41px;font-size:24.5px;line-height:31px;font-weight:400;color:#4a5063;letter-spacing:0.188px;font-family:"Liberation Sans",sans-serif;">Asset</div>
<div class="t" style="left:1387.20px;top:1016.41px;font-size:24.5px;line-height:31px;font-weight:400;color:#4a5063;letter-spacing:0.495px;font-family:"Liberation Sans",sans-serif;">Code location</div>
<div class="t" style="left:2001.00px;top:1016.41px;font-size:24.5px;line-height:31px;font-weight:400;color:#4a5063;letter-spacing:0.368px;font-family:"Liberation Sans",sans-serif;">Materializations</div>
<div class="t" style="left:2324.20px;top:1015.51px;font-size:24.5px;line-height:31px;font-weight:400;color:#4a5063;letter-spacing:0.050px;font-family:"Liberation Sans",sans-serif;">Change</div>
<div class="b" style="left:1361px;top:1002px;width:2px;height:60px;background:#e6e7eb"></div>
<div class="b" style="left:1953px;top:1002px;width:2px;height:60px;background:#e6e7eb"></div>
<div class="b" style="left:2297px;top:1002px;width:2px;height:60px;background:#e6e7eb"></div>
<svg class="b" style="left:1313.5px;top:1018px;" width="20" height="30" viewBox="0 0 20 30"><path d="M2.8 10.2 L9 4 L15.2 10.2 M2.8 19.8 L9 26 L15.2 19.8" fill="none" stroke="#030615" stroke-width="2.4"/></svg>
<svg class="b" style="left:1905.5px;top:1018px;" width="20" height="30" viewBox="0 0 20 30"><path d="M2.8 10.2 L9 4 L15.2 10.2 M2.8 19.8 L9 26 L15.2 19.8" fill="none" stroke="#030615" stroke-width="2.4"/></svg>
<svg class="b" style="left:2571.5px;top:1018px;" width="20" height="30" viewBox="0 0 20 30"><path d="M2.8 10.2 L9 4 L15.2 10.2 M2.8 19.8 L9 26 L15.2 19.8" fill="none" stroke="#030615" stroke-width="2.4"/></svg>
<svg class="b" style="left:2196px;top:1017px;" width="30" height="30" viewBox="0 0 30 30"><circle cx="15" cy="15" r="11.8" fill="none" stroke="#030615" stroke-width="2.5"/><rect x="13.8" y="13" width="2.5" height="8" fill="#030615"/><circle cx="15" cy="9.4" r="1.6" fill="#030615"/></svg>
<svg class="b" style="left:2428.2px;top:1017px;" width="30" height="30" viewBox="0 0 30 30"><circle cx="15" cy="15" r="11.8" fill="none" stroke="#030615" stroke-width="2.5"/><rect x="13.8" y="13" width="2.5" height="8" fill="#030615"/><circle cx="15" cy="9.4" r="1.6" fill="#030615"/></svg>
<svg class="b" style="left:2249px;top:1026px;" width="20" height="14" viewBox="0 0 20 14"><path d="M2 2 L9 9 L16 2" fill="none" stroke="#030615" stroke-width="2.4"/></svg>
<div class="b" style="left:1349.5px;top:1064px;width:2px;height:452px;background:#e6e7eb"></div>
<div class="b" style="left:1933px;top:1064px;width:2px;height:452px;background:#e6e7eb"></div>
<div class="b" style="left:2272.5px;top:1064px;width:2px;height:452px;background:#e6e7eb"></div>
<div class="b" style="left:2612px;top:1064px;width:2px;height:452px;background:#e6e7eb"></div>
<div class="b" style="left:2614px;top:1064px;width:26px;height:452px;background:#fafafa"></div>
<div class="b" style="left:2622.5px;top:1069.8px;width:15.5px;height:226px;background:#c1c1c1;border-radius:8px"></div>
<div class="b" style="left:522.5px;top:1092.5px;width:27px;height:27px;background:#4f43dd;border-radius:4px"></div>
<svg class="b" style="left:522.5px;top:1092.5px;" width="27" height="27" viewBox="0 0 27 27"><path d="M4 13.3 L10.6 19.3 L22.4 6.8" fill="none" stroke="#fff" stroke-width="2.7"/></svg>
<svg class="b" style="left:566px;top:1092px;" width="28" height="28" viewBox="0 0 28 28"><g fill="none" stroke="#030615" stroke-width="2.5"><rect x="2.7" y="2.7" width="22.2" height="22" rx="1.5"/><path d="M2.7 9.6 H24.9 M2.7 17.3 H24.9 M10 9.6 V24.7 M17.5 9.6 V24.7"/></g></svg>
<div class="t" style="left:612.70px;top:1089.20px;font-size:28px;line-height:35px;font-weight:400;color:#2e2a91;letter-spacing:0.286px;font-family:"Liberation Sans",sans-serif;">CLEANED/orders_cleaned</div>
<div class="t" style="left:1375.60px;top:1089.20px;font-size:28px;line-height:35px;font-weight:400;color:#030615;letter-spacing:1.250px;font-family:"Liberation Sans",sans-serif;">data-eng-pipeline</div>
<div class="t" style="left:2196.60px;top:1089.20px;font-size:28px;line-height:35px;font-weight:400;color:#030615;letter-spacing:2.500px;font-family:"Liberation Sans",sans-serif;">463</div>
<svg class="b" style="left:2300px;top:1091px;" width="28" height="28" viewBox="0 0 28 28"><path d="M14 23.6 V4.5 M5.5 13 L14 4.5 L22.5 13" fill="none" stroke="#030615" stroke-width="2.5"/></svg>
<div class="t" style="left:2347.80px;top:1089.20px;font-size:28px;line-height:35px;font-weight:400;color:#030615;letter-spacing:0.800px;font-family:"Liberation Sans",sans-serif;">+41.2%</div>
<div class="b" style="left:476px;top:1146px;width:2136px;height:2px;background:#e6e7eb"></div>
<div class="b" style="left:522.5px;top:1176.5px;width:27px;height:27px;background:#d96c6c;border-radius:4px"></div>
<svg class="b" style="left:522.5px;top:1176.5px;" width="27" height="27" viewBox="0 0 27 27"><path d="M4 13.3 L10.6 19.3 L22.4 6.8" fill="none" stroke="#fff" stroke-width="2.7"/></svg>
<svg class="b" style="left:566px;top:1176px;" width="28" height="28" viewBox="0 0 28 28"><g fill="none" stroke="#030615" stroke-width="2.5"><rect x="2.7" y="2.7" width="22.2" height="22" rx="1.5"/><path d="M2.7 9.6 H24.9 M2.7 17.3 H24.9 M10 9.6 V24.7 M17.5 9.6 V24.7"/></g></svg>
<div class="t" style="left:612.70px;top:1173.20px;font-size:28px;line-height:35px;font-weight:400;color:#2e2a91;letter-spacing:0.150px;font-family:"Liberation Sans",sans-serif;">CLEANED/users_cleaned</div>
<div class="t" style="left:1375.60px;top:1173.20px;font-size:28px;line-height:35px;font-weight:400;color:#030615;letter-spacing:1.250px;font-family:"Liberation Sans",sans-serif;">data-eng-pipeline</div>
<div class="t" style="left:2196.60px;top:1173.20px;font-size:28px;line-height:35px;font-weight:400;color:#030615;letter-spacing:2.500px;font-family:"Liberation Sans",sans-serif;">461</div>
<svg class="b" style="left:2300px;top:1175px;" width="28" height="28" viewBox="0 0 28 28"><path d="M14 23.6 V4.5 M5.5 13 L14 4.5 L22.5 13" fill="none" stroke="#030615" stroke-width="2.5"/></svg>
<div class="t" style="left:2347.80px;top:1173.20px;font-size:28px;line-height:35px;font-weight:400;color:#030615;letter-spacing:0.800px;font-family:"Liberation Sans",sans-serif;">+41.0%</div>
<div class="b" style="left:476px;top:1230px;width:2136px;height:2px;background:#e6e7eb"></div>
<div class="b" style="left:522.5px;top:1260.5px;width:27px;height:27px;background:#4fb1d1;border-radius:4px"></div>
<svg class="b" style="left:522.5px;top:1260.5px;" width="27" height="27" viewBox="0 0 27 27"><path d="M4 13.3 L10.6 19.3 L22.4 6.8" fill="none" stroke="#fff" stroke-width="2.7"/></svg>
<svg class="b" style="left:566px;top:1260px;" width="28" height="28" viewBox="0 0 28 28"><g fill="none" stroke="#030615" stroke-width="2.5"><rect x="2.7" y="2.7" width="22.2" height="22" rx="1.5"/><path d="M2.7 9.6 H24.9 M2.7 17.3 H24.9 M10 9.6 V24.7 M17.5 9.6 V24.7"/></g></svg>
<div class="t" style="left:612.70px;top:1257.20px;font-size:28px;line-height:35px;font-weight:400;color:#2e2a91;letter-spacing:-0.185px;font-family:"Liberation Sans",sans-serif;">RAW_DATA/users</div>
<div class="t" style="left:1375.60px;top:1257.20px;font-size:28px;line-height:35px;font-weight:400;color:#030615;letter-spacing:1.250px;font-family:"Liberation Sans",sans-serif;">data-eng-pipeline</div>
<div class="t" style="left:2196.60px;top:1257.20px;font-size:28px;line-height:35px;font-weight:400;color:#030615;letter-spacing:2.500px;font-family:"Liberation Sans",sans-serif;">328</div>
<svg class="b" style="left:2300px;top:1259px;" width="28" height="28" viewBox="0 0 28 28"><path d="M14 23.6 V4.5 M5.5 13 L14 4.5 L22.5 13" fill="none" stroke="#030615" stroke-width="2.5"/></svg>
<div class="t" style="left:2347.80px;top:1257.20px;font-size:28px;line-height:35px;font-weight:400;color:#030615;letter-spacing:1.125px;font-family:"Liberation Sans",sans-serif;">+2,242.9%</div>
<div class="b" style="left:476px;top:1314px;width:2136px;height:2px;background:#e6e7eb"></div>
<div class="b" style="left:522.5px;top:1344.5px;width:27px;height:27px;background:#a066f0;border-radius:4px"></div>
<svg class="b" style="left:522.5px;top:1344.5px;" width="27" height="27" viewBox="0 0 27 27"><path d="M4 13.3 L10.6 19.3 L22.4 6.8" fill="none" stroke="#fff" stroke-width="2.7"/></svg>
<svg class="b" style="left:566px;top:1344px;" width="28" height="28" viewBox="0 0 28 28"><g fill="none" stroke="#030615" stroke-width="2.5"><rect x="2.7" y="2.7" width="22.2" height="22" rx="1.5"/><path d="M2.7 9.6 H24.9 M2.7 17.3 H24.9 M10 9.6 V24.7 M17.5 9.6 V24.7"/></g></svg>
<div class="t" style="left:612.70px;top:1341.20px;font-size:28px;line-height:35px;font-weight:400;color:#2e2a91;letter-spacing:0.000px;font-family:"Liberation Sans",sans-serif;">RAW_DATA/orders</div>
<div class="t" style="left:1375.60px;top:1341.20px;font-size:28px;line-height:35px;font-weight:400;color:#030615;letter-spacing:1.250px;font-family:"Liberation Sans",sans-serif;">data-eng-pipeline</div>
<div class="t" style="left:2196.60px;top:1341.20px;font-size:28px;line-height:35px;font-weight:400;color:#030615;letter-spacing:2.500px;font-family:"Liberation Sans",sans-serif;">327</div>
<svg class="b" style="left:2300px;top:1343px;" width="28" height="28" viewBox="0 0 28 28"><path d="M14 23.6 V4.5 M5.5 13 L14 4.5 L22.5 13" fill="none" stroke="#030615" stroke-width="2.5"/></svg>
<div class="t" style="left:2347.80px;top:1341.20px;font-size:28px;line-height:35px;font-weight:400;color:#030615;letter-spacing:1.125px;font-family:"Liberation Sans",sans-serif;">+2,080.0%</div>
<div class="b" style="left:476px;top:1398px;width:2136px;height:2px;background:#e6e7eb"></div>
<div class="b" style="left:522.5px;top:1428.5px;width:27px;height:27px;background:#3b82f0;border-radius:4px"></div>
<svg class="b" style="left:522.5px;top:1428.5px;" width="27" height="27" viewBox="0 0 27 27"><path d="M4 13.3 L10.6 19.3 L22.4 6.8" fill="none" stroke="#fff" stroke-width="2.7"/></svg>
<svg class="b" style="left:566px;top:1428px;" width="28" height="28" viewBox="0 0 28 28"><g fill="none" stroke="#030615" stroke-width="2.5"><rect x="2.7" y="2.7" width="22.2" height="22" rx="1.5"/><path d="M2.7 9.6 H24.9 M2.7 17.3 H24.9 M10 9.6 V24.7 M17.5 9.6 V24.7"/></g></svg>
<div class="t" style="left:612.70px;top:1425.20px;font-size:28px;line-height:35px;font-weight:400;color:#2e2a91;letter-spacing:0.438px;font-family:"Liberation Sans",sans-serif;">poll_snowflake_query_history_hour</div>
<div class="t" style="left:1375.60px;top:1425.20px;font-size:28px;line-height:35px;font-weight:400;color:#030615;letter-spacing:0.706px;font-family:"Liberation Sans",sans-serif;">snowflake_insights</div>
<div class="t" style="left:2196.60px;top:1425.20px;font-size:28px;line-height:35px;font-weight:400;color:#030615;letter-spacing:2.500px;font-family:"Liberation Sans",sans-serif;">150</div>
<svg class="b" style="left:2300px;top:1427px;" width="28" height="28" viewBox="0 0 28 28"><path d="M14 23.6 V4.5 M5.5 13 L14 4.5 L22.5 13" fill="none" stroke="#030615" stroke-width="2.5"/></svg>
<div class="t" style="left:2347.80px;top:1425.20px;font-size:28px;line-height:35px;font-weight:400;color:#030615;letter-spacing:0.800px;font-family:"Liberation Sans",sans-serif;">+97.4%</div>
<div class="b" style="left:476px;top:1482px;width:2136px;height:2px;background:#e6e7eb"></div>
<div class="b" style="left:522.5px;top:1512.5px;width:27px;height:27px;background:#e6489a;border-radius:4px"></div>
<svg class="b" style="left:522.5px;top:1512.5px;" width="27" height="27" viewBox="0 0 27 27"><path d="M4 13.3 L10.6 19.3 L22.4 6.8" fill="none" stroke="#fff" stroke-width="2.7"/></svg>
<svg class="b" style="left:566px;top:1512px;" width="28" height="28" viewBox="0 0 28 28"><g fill="none" stroke="#030615" stroke-width="2.5"><rect x="2.7" y="2.7" width="22.2" height="22" rx="1.5"/><path d="M2.7 9.6 H24.9 M2.7 17.3 H24.9 M10 9.6 V24.7 M17.5 9.6 V24.7"/></g></svg>
<div class="t" style="left:612.70px;top:1507.70px;font-size:28px;line-height:35px;font-weight:400;color:#2e2a91;letter-spacing:0.000px;font-family:"Liberation Sans",sans-serif;letter-spacing:0.6px">CLEANED/joined_users_orders</div>
<div class="t" style="left:1375.60px;top:1507.70px;font-size:28px;line-height:35px;font-weight:400;color:#030615;letter-spacing:1.250px;font-family:"Liberation Sans",sans-serif;">data-eng-pipeline</div>
<div class="t" style="left:2217.60px;top:1507.70px;font-size:28px;line-height:35px;font-weight:400;color:#030615;letter-spacing:0.000px;font-family:"Liberation Sans",sans-serif;">47</div>
<svg class="b" style="left:2300px;top:1511px;" width="28" height="28" viewBox="0 0 28 28"><path d="M14 23.6 V4.5 M5.5 13 L14 4.5 L22.5 13" fill="none" stroke="#030615" stroke-width="2.5"/></svg>
<div class="t" style="left:2347.80px;top:1507.70px;font-size:28px;line-height:35px;font-weight:400;color:#030615;letter-spacing:0.000px;font-family:"Liberation Sans",sans-serif;letter-spacing:1.2px">+1,060.0%</div>
</div></body></html>
